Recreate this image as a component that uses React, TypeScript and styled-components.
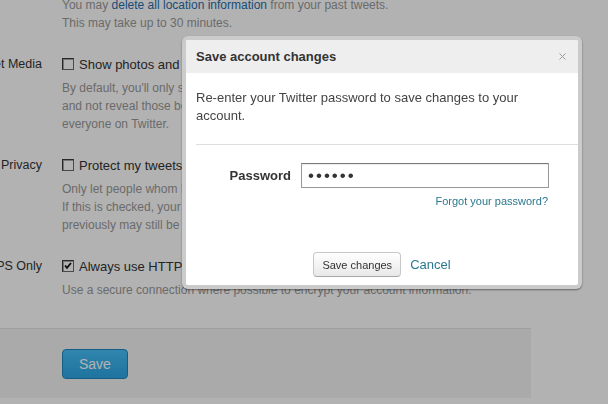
import React from "react";
import styled, { createGlobalStyle } from "styled-components";

const GlobalStyle = createGlobalStyle`
  html, body {
    margin: 0;
    padding: 0;
    background: #ffffff;
    overflow: hidden;
  }
  body {
    font-family: "Liberation Sans", Arial, Helvetica, sans-serif;
  }
  * { box-sizing: border-box; }
`;

/* ---------- settings page (behind the overlay) ---------- */

const Page = styled.main`
  width: 631px;
  margin: -4px 0 0 -100px;
`;

const Setting = styled.section`
  display: grid;
  grid-template-columns: 142px 1fr;
  column-gap: 20px;
  & + & {
    margin-top: 22px;
  }
`;

const SettingLabel = styled.div`
  text-align: right;
  font-size: 12.5px;
  line-height: 20px;
  color: #333333;
  white-space: nowrap;
`;

const SettingBody = styled.div`
  grid-column: 2;
`;

const CheckRow = styled.label`
  display: flex;
  align-items: center;
  gap: 5px;
  height: 20px;
  font-size: 13px;
  color: #333333;
  white-space: nowrap;
`;

const Box = styled.span<{ $checked?: boolean }>`
  flex: none;
  width: 12px;
  height: 12px;
  display: flex;
  align-items: center;
  justify-content: center;
  border: 1px solid #3a3a3a;
  border-right-color: #6a6a6a;
  border-bottom-color: #6a6a6a;
  background: #ffffff;
  box-shadow: inset 1px 1px 0 #a8a8a8;
`;

const Hint = styled.p<{ $flush?: boolean }>`
  margin: ${(p) => (p.$flush ? "0" : "5px 0 0")};
  font-size: 12px;
  line-height: 18px;
  color: #999999;
  white-space: nowrap;
`;

const HintLink = styled.a`
  color: #1f6fb0;
  text-decoration: none;
`;

const Footer = styled.div`
  margin-top: 29px;
  border-top: 1px solid #e4e4e4;
  background: #f4f4f4;
  padding: 20px 0 19px 162px;
`;

const PrimaryButton = styled.button`
  height: 30px;
  padding: 0 16px;
  font-family: inherit;
  font-size: 14px;
  color: #ffffff;
  border: 1px solid #1f86bf;
  border-radius: 4px;
  background: linear-gradient(#46c0fa, #2ca6e4);
`;

/* ---------- modal ---------- */

const Overlay = styled.div`
  position: fixed;
  inset: 0;
  background: rgba(0, 0, 0, 0.3);
`;

const Dialog = styled.div`
  position: fixed;
  left: 182px;
  top: 36px;
  width: 400px;
  height: 253px;
  padding: 4px;
  background: #cbcbcb;
  border-radius: 6px;
  box-shadow: 0 1px 2px rgba(0, 0, 0, 0.45);
`;

const DialogInner = styled.div`
  height: 100%;
  background: #ffffff;
  border-radius: 2px;
  overflow: hidden;
  display: flex;
  flex-direction: column;
`;

const DialogHeader = styled.header`
  flex: none;
  height: 33px;
  background: #eeeeee;
  padding: 0 12px 0 10px;
  display: flex;
  align-items: center;
  justify-content: space-between;
`;

const DialogTitle = styled.h2`
  margin: 0;
  font-size: 13px;
  font-weight: bold;
  color: #333333;
`;

const CloseButton = styled.button`
  padding: 0;
  border: 0;
  background: none;
  width: 7px;
  height: 7px;
  display: flex;
`;

const DialogBody = styled.div`
  flex: none;
  padding: 16px 0 0 10px;
`;

const Intro = styled.p`
  margin: 0;
  padding-right: 20px;
  font-size: 13px;
  line-height: 18px;
  color: #444444;
`;

const Divider = styled.hr`
  margin: 19px 0 0;
  border: 0;
  border-top: 1px solid #dddddd;
`;

const PasswordForm = styled.div`
  padding-top: 18px;
  display: grid;
  grid-template-columns: 95px 248px;
  column-gap: 10px;
  align-items: center;
`;

const FieldLabel = styled.label`
  text-align: right;
  font-size: 13px;
  font-weight: bold;
  color: #333333;
`;

const PasswordInput = styled.input`
  width: 248px;
  height: 25px;
  padding: 0 6px;
  font-family: inherit;
  font-size: 17px;
  letter-spacing: 2px;
  color: #333333;
  border: 1px solid #999999;
  border-top-color: #7a7a7a;
  box-shadow: inset 0 1px 1px rgba(0, 0, 0, 0.08);
  outline: none;
`;

const ForgotLink = styled.a`
  grid-column: 2;
  justify-self: end;
  margin: 6px 1px 0 0;
  font-size: 11px;
  line-height: 14px;
  color: #2b7890;
  text-decoration: none;
`;

const Actions = styled.div`
  margin-top: auto;
  padding-bottom: 8px;
  display: flex;
  justify-content: center;
  align-items: center;
  gap: 9px;
`;

const SecondaryButton = styled.button`
  height: 25px;
  padding: 0 8px;
  font-family: inherit;
  font-size: 11px;
  color: #333333;
  border: 1px solid #c8c8c8;
  border-bottom-color: #a8a8a8;
  border-radius: 4px;
  background: linear-gradient(#ffffff, #e8e8e8);
`;

const CancelLink = styled.a`
  font-size: 13px;
  color: #2b7890;
  text-decoration: none;
`;

const CheckMark = () => (
  <svg width="8" height="8" viewBox="0 0 8 8" aria-hidden>
    <path d="M1 3.5 L3 5.8 L7 1" fill="none" stroke="#111" strokeWidth="1.8" />
  </svg>
);

const CloseIcon = () => (
  <svg width="7" height="7" viewBox="0 0 7 7" aria-hidden>
    <path d="M0.5 0.5 L6.5 6.5 M6.5 0.5 L0.5 6.5" stroke="#9a9a9a" strokeWidth="1" />
  </svg>
);

export default function App() {
  return (
    <>
      <GlobalStyle />
      <Page>
        <Setting>
          <SettingBody>
            <Hint $flush>
              You may <HintLink href="#">delete all location information</HintLink> from your past tweets.
            </Hint>
            <Hint $flush>This may take up to 30 minutes.</Hint>
          </SettingBody>
        </Setting>

        <Setting>
          <SettingLabel>Tweet Media</SettingLabel>
          <SettingBody>
            <CheckRow>
              <Box />
              Show photos and videos in my timeline
            </CheckRow>
            <Hint>
              By default, you'll only see photos and videos from people you follow,
              <br />
              and not reveal those beneath a warning to
              <br />
              everyone on Twitter.
            </Hint>
          </SettingBody>
        </Setting>

        <Setting>
          <SettingLabel>Tweet Privacy</SettingLabel>
          <SettingBody>
            <CheckRow>
              <Box />
              Protect my tweets
            </CheckRow>
            <Hint>
              Only let people whom I approve follow my tweets.
              <br />
              If this is checked, your future tweets will not be available publicly.
              <br />
              previously may still be publicly visible in some places.
            </Hint>
          </SettingBody>
        </Setting>

        <Setting>
          <SettingLabel>HTTPS Only</SettingLabel>
          <SettingBody>
            <CheckRow>
              <Box $checked>
                <CheckMark />
              </Box>
              Always use HTTPS
            </CheckRow>
            <Hint>Use a secure connection where possible to encrypt your account information.</Hint>
          </SettingBody>
        </Setting>

        <Footer>
          <PrimaryButton>Save</PrimaryButton>
        </Footer>
      </Page>

      <Overlay />

      <Dialog role="dialog" aria-label="Save account changes">
        <DialogInner>
          <DialogHeader>
            <DialogTitle>Save account changes</DialogTitle>
            <CloseButton aria-label="Close">
              <CloseIcon />
            </CloseButton>
          </DialogHeader>
          <DialogBody>
            <Intro>Re-enter your Twitter password to save changes to your account.</Intro>
            <Divider />
            <PasswordForm>
              <FieldLabel htmlFor="pw">Password</FieldLabel>
              <PasswordInput id="pw" type="password" defaultValue="secret" readOnly />
              <ForgotLink href="#">Forgot your password?</ForgotLink>
            </PasswordForm>
          </DialogBody>
          <Actions>
            <SecondaryButton>Save changes</SecondaryButton>
            <CancelLink href="#">Cancel</CancelLink>
          </Actions>
        </DialogInner>
      </Dialog>
    </>
  );
}
